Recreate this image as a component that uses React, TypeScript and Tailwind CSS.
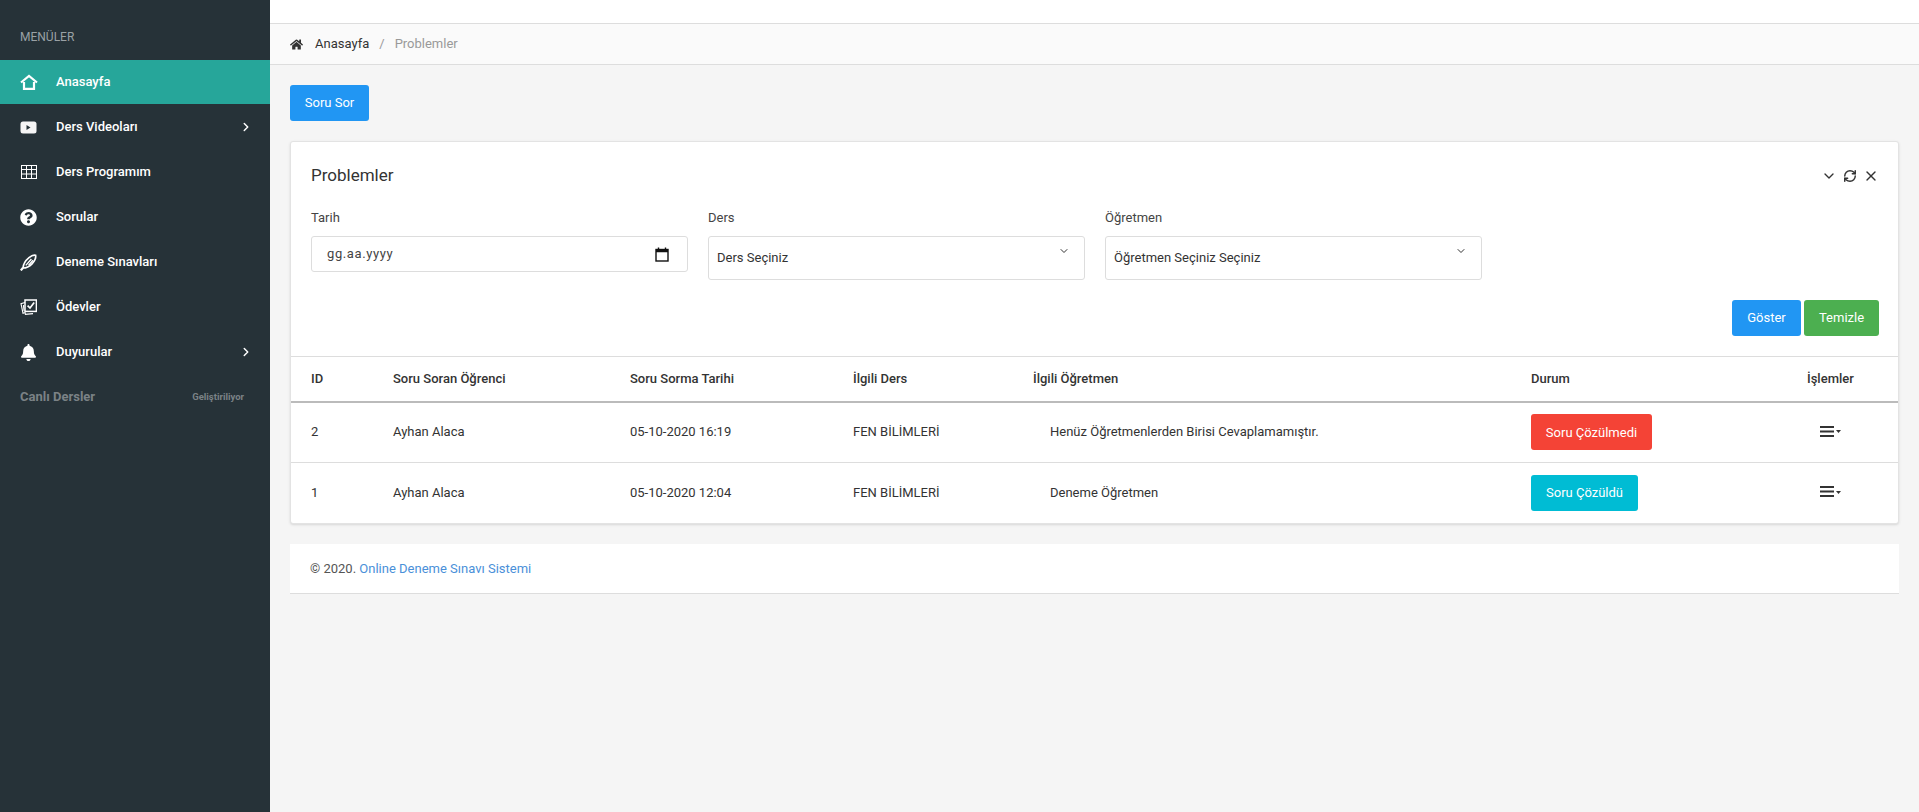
import React from "react";
import { FaQuestionCircle, FaBell, FaHome } from "react-icons/fa";
import { ChevronRight, ChevronDown, RefreshCw, X } from "lucide-react";

const HomeIcon = () => (
  <svg width="18" height="16" viewBox="0 0 18 16" fill="none" stroke="white" strokeWidth="2.2" className="shrink-0">
    <path d="M1 8.5 L9 2 L17 8.5" />
    <path d="M4 8 V14.8 H14 V8" />
  </svg>
);
const VideoIcon = () => (
  <svg width="17" height="13" viewBox="0 0 17 13" className="shrink-0">
    <rect x="0.5" y="0.5" width="16" height="12" rx="2.5" fill="#f5f5f5" />
    <path d="M6.5 4 L10.5 6.5 L6.5 9 Z" fill="#263238" />
  </svg>
);
const GridIcon = () => (
  <svg width="16" height="14" viewBox="0 0 16 14" fill="none" stroke="white" strokeWidth="1" className="shrink-0">
    <rect x="0.5" y="0.5" width="15" height="13" />
    <path d="M0.5 4.5H15.5M0.5 9H15.5M5.5 0.5V13.5M10.5 0.5V13.5" />
  </svg>
);
const PenIcon = () => (
  <svg width="17" height="17" viewBox="0 0 17 17" fill="none" stroke="white" strokeWidth="1.7" className="shrink-0">
    <path d="M0.8 16.4 L3 13.8" strokeWidth="2.2" />
    <path d="M3 14 C3.2 10 5.5 6.5 9 3.6 C11.5 1.6 14 1 15.6 1.3 C16 3.5 14.8 6.8 12 9.8 C9.2 12.7 6.2 14 3 14 Z" />
    <path d="M5.8 11.4 L11.4 5" strokeWidth="1.4" />
    <path d="M8.6 11.2 L13 6.2" strokeWidth="1.4" />
  </svg>
);
const CardsIcon = () => (
  <svg width="17" height="16" viewBox="0 0 17 16" fill="none" stroke="white" className="shrink-0">
    <path d="M5 3.5 L1 4.6 L3 14.2 L5.5 13.4" strokeWidth="1.1" />
    <path d="M3.4 6 L4 12" strokeWidth="1" />
    <path d="M5 13.5 L5.4 15.4 L13 14.6" strokeWidth="1.1" />
    <rect x="5" y="1" width="11.4" height="11.4" strokeWidth="1.5" />
    <path d="M7.6 6.6 L10 9 L14.2 3.6" strokeWidth="1.7" />
  </svg>
);
const MenuIcon = () => (
  <span className="inline-flex items-center gap-[2px]">
    <svg width="14" height="11" viewBox="0 0 14 11" fill="#333">
      <rect y="0" width="14" height="2" />
      <rect y="4.5" width="14" height="2" />
      <rect y="9" width="14" height="2" />
    </svg>
    <svg width="5" height="3" viewBox="0 0 5 3" fill="#333" className="mt-[1px]">
      <path d="M0 0H5L2.5 3Z" />
    </svg>
  </span>
);

const items: { label: string; icon: React.ReactNode; active?: boolean; arrow?: boolean }[] = [
  { label: "Anasayfa", icon: <HomeIcon />, active: true },
  { label: "Ders Videoları", icon: <VideoIcon />, arrow: true },
  { label: "Ders Programım", icon: <GridIcon /> },
  { label: "Sorular", icon: <FaQuestionCircle size={17} color="white" /> },
  { label: "Deneme Sınavları", icon: <PenIcon /> },
  { label: "Ödevler", icon: <CardsIcon /> },
  { label: "Duyurular", icon: <FaBell size={17} color="white" />, arrow: true },
];

const rows = [
  { id: "2", date: "05-10-2020 16:19", teacher: "Henüz Öğretmenlerden Birisi Cevaplamamıştır.", status: "Soru Çözülmedi", color: "bg-[#f44336] w-[121px]" },
  { id: "1", date: "05-10-2020 12:04", teacher: "Deneme Öğretmen", status: "Soru Çözüldü", color: "bg-[#00bcd4] w-[107px]" },
];

const Field = ({ label, children }: { label: string; children: React.ReactNode }) => (
  <div>
    <div className="mb-[9px] h-[20px] leading-[22px] text-[#444]">{label}</div>
    {children}
  </div>
);

const Select = ({ text }: { text: string }) => (
  <div className="relative flex h-[44px] items-center rounded-[3px] border border-[#ddd] bg-white pl-[8px] text-[13px] text-[#333]">
    {text}
    <ChevronDown size={12} strokeWidth={2} className="absolute right-[14px] top-[8px] text-[#333]" />
  </div>
);

export default function App() {
  return (
    <div className="flex min-h-[812px] bg-white text-[13px] text-[#333]" style={{ fontFamily: "Roboto, 'Noto Sans', sans-serif" }}>
      <aside className="w-[270px] shrink-0 bg-[#263238]">
        <div className="flex h-[60px] items-center pl-[20px] pt-[14px] text-[12px] text-[#9aa1a5]">MENÜLER</div>
        <nav className="flex flex-col gap-[1px]">
          {items.map((it) => (
            <div
              key={it.label}
              className={`flex h-[44px] items-center pl-[20px] pr-[17px] font-medium text-white ${it.active ? "bg-[#26a69a]" : ""}`}
            >
              <span className="flex w-[17px] justify-center">{it.icon}</span>
              <span className="ml-[19px] flex-1">{it.label}</span>
              {it.arrow && <ChevronRight size={14} strokeWidth={2.5} color="white" />}
            </div>
          ))}
          <div className="flex h-[44px] items-center justify-between pl-[20px] pr-[26px] font-bold text-[#7b8286]">
            <span>Canlı Dersler</span>
            <span className="text-[9.5px]">Geliştiriliyor</span>
          </div>
        </nav>
      </aside>

      <main className="flex min-w-0 flex-1 flex-col">
        <div className="h-[24px] border-b border-[#ddd] bg-white" />
        <div className="flex h-[41px] items-center border-b border-[#ddd] bg-[#fafafa] pl-[20px]">
          <FaHome size={13} color="#333" />
          <span className="ml-[12px]">Anasayfa</span>
          <span className="mx-[10px] text-[#999]">/</span>
          <span className="text-[#999]">Problemler</span>
        </div>

        <div className="flex flex-1 flex-col items-start bg-[#f5f5f5] p-[20px]">
          <button className="h-[36px] w-[79px] rounded-[3px] bg-[#2196f3] text-center text-white">Soru Sor</button>

          <section className="mt-[20px] w-full rounded-[3px] border border-[#e3e3e3] bg-white shadow-sm">
            <div className="flex h-[65px] items-center justify-between pl-[20px] pr-[19px] pt-[2px]">
              <h2 className="text-[17px] leading-none text-[#333]">Problemler</h2>
              <div className="flex items-center gap-[6px] text-[#333]">
                <ChevronDown size={16} strokeWidth={2} />
                <RefreshCw size={14} strokeWidth={2.5} />
                <X size={16} strokeWidth={2} />
              </div>
            </div>

            <div className="grid grid-cols-4 items-start gap-[20px] pl-[20px] pr-[19px]">
              <Field label="Tarih">
                <div className="flex h-[36px] items-center justify-between rounded-[3px] border border-[#ddd] pl-[15px] pr-[18px] text-[#444]">
                  <span className="tracking-[0.6px]">gg.aa.yyyy</span>
                  <svg width="14" height="15" viewBox="0 0 14 15" fill="none" stroke="#111">
                    <rect x="1" y="2.5" width="12" height="11.5" strokeWidth="1.4" />
                    <path d="M1 4H13" strokeWidth="2.5" />
                    <path d="M3.5 0.5V2.5M10.5 0.5V2.5" strokeWidth="1.4" />
                  </svg>
                </div>
              </Field>
              <Field label="Ders">
                <Select text="Ders Seçiniz" />
              </Field>
              <Field label="Öğretmen">
                <Select text="Öğretmen Seçiniz Seçiniz" />
              </Field>
            </div>

            <div className="mt-[20px] flex justify-end gap-[3px] pr-[19px]">
              <button className="h-[36px] w-[69px] rounded-[3px] bg-[#2196f3] text-white">Göster</button>
              <button className="h-[36px] w-[75px] rounded-[3px] bg-[#4caf50] text-white">Temizle</button>
            </div>

            <table className="mt-[20px] w-full table-fixed border-collapse">
              <colgroup>
                <col className="w-[82px]" />
                <col className="w-[237px]" />
                <col className="w-[223px]" />
                <col className="w-[180px]" />
                <col className="w-[498px]" />
                <col className="w-[276px]" />
                <col />
              </colgroup>
              <thead>
                <tr className="h-[45px] border-y border-t-[#ddd] border-b-2 border-b-[#bbb] text-left text-[#333]">
                  {["ID", "Soru Soran Öğrenci", "Soru Sorma Tarihi", "İlgili Ders", "İlgili Öğretmen", "Durum", "İşlemler"].map((h) => (
                    <th key={h} className="pl-[20px] font-medium">{h}</th>
                  ))}
                </tr>
              </thead>
              <tbody>
                {rows.map((r, i) => (
                  <tr key={r.id} className={i === 0 ? "h-[61px] border-b border-[#ddd] [&>td.t]:pb-[2px]" : "h-[60px]"}>
                    <td className="t pl-[20px]">{r.id}</td>
                    <td className="t pl-[20px]">Ayhan Alaca</td>
                    <td className="t pl-[20px]">{r.date}</td>
                    <td className="t pl-[20px]">FEN BİLİMLERİ</td>
                    <td className="t pl-[37px]">{r.teacher}</td>
                    <td className="pl-[20px]">
                      <span className={`inline-flex h-[36px] items-center justify-center rounded-[3px] text-white ${r.color}`}>{r.status}</span>
                    </td>
                    <td className="pl-[33px]"><MenuIcon /></td>
                  </tr>
                ))}
              </tbody>
            </table>
          </section>

          <footer className="mt-[20px] flex h-[50px] w-full items-center border-b border-[#ddd] bg-white pl-[20px] pt-[1px] text-[#555]">
            <span>© 2020.&nbsp;</span>
            <span className="text-[#4a90d9]">Online Deneme Sınavı Sistemi</span>
          </footer>
        </div>
      </main>
    </div>
  );
}
